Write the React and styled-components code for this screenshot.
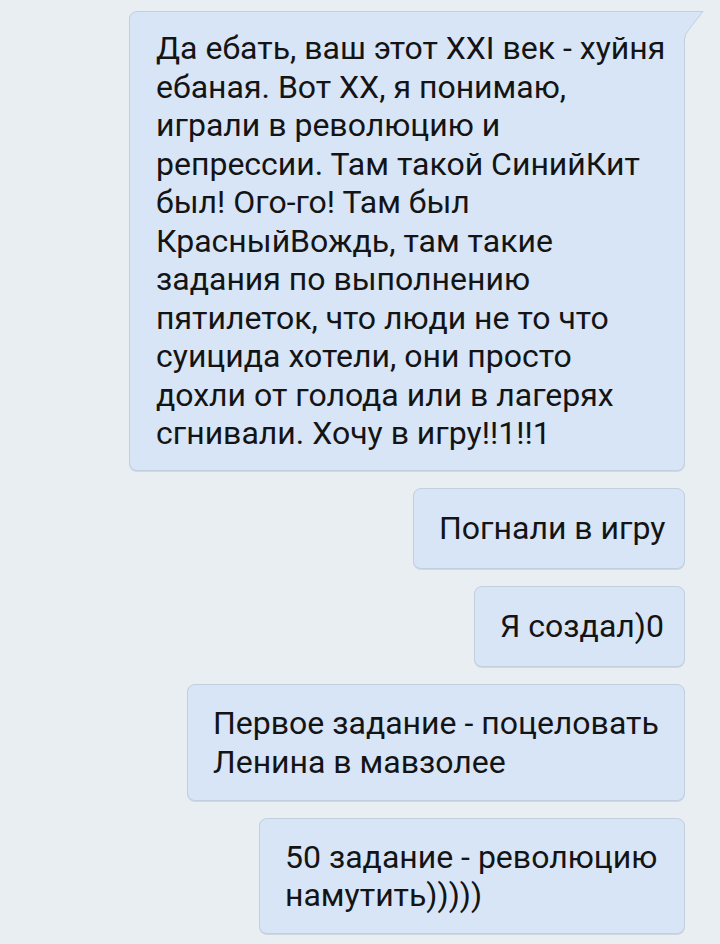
import React from 'react';
import styled, { createGlobalStyle } from 'styled-components';

const GlobalStyle = createGlobalStyle`
    html, body {
        margin: 0;
        padding: 0;
        background: #e9eef3;
    }
    body {
        font-family: Roboto, "Noto Sans", sans-serif;
    }
`;

// Styled components
const Chat = styled.div`
    width: 720px;
    height: 944px;
    overflow: hidden;
    box-sizing: border-box;
    padding: 11px 35px 0 0;
    display: flex;
    flex-direction: column;
    align-items: flex-end;
    gap: 17px;
    background: #e9eef3;
`;

const paddings = {
    first: '17px 16px 17.5px 26px',
    single: '20px 16px 20.5px 25px',
    multi: '19px 16px 18.5px 25px',
};

const Bubble = styled.div`
    position: relative;
    box-sizing: border-box;
    width: ${(p) => p.$width}px;
    padding: ${(p) => paddings[p.$kind]};
    background: #d7e5f7;
    border: 1px solid #c2cfdf;
    border-radius: 8px;
    border-top-right-radius: ${(p) => (p.$kind === 'first' ? '0' : '8px')};
    box-shadow: 0 1px 0 rgba(160, 175, 195, 0.35);
`;

const Line = styled.span`
    display: block;
    white-space: nowrap;
    font-size: 32px;
    line-height: 38.5px;
    color: #141414;
`;

const Tail = styled.svg`
    position: absolute;
    top: -1px;
    right: -20px;
    width: 21px;
    height: 30px;
    overflow: visible;
`;

const messages = [
    {
        width: 556,
        first: true,
        lines: [
            'Да ебать, ваш этот XXI век - хуйня',
            'ебаная. Вот XX, я понимаю,',
            'играли в революцию и',
            'репрессии. Там такой СинийКит',
            'был! Ого-го! Там был',
            'КрасныйВождь, там такие',
            'задания по выполнению',
            'пятилеток, что люди не то что',
            'суицида хотели, они просто',
            'дохли от голода или в лагерях',
            'сгнивали. Хочу в игру!!1!!1',
        ],
    },
    { width: 272, lines: ['Погнали в игру'] },
    { width: 211, lines: ['Я создал)0'] },
    { width: 498, lines: ['Первое задание - поцеловать', 'Ленина в мавзолее'] },
    { width: 426, lines: ['50 задание - революцию', 'намутить)))))'] },
];

function App() {
    return (
        <>
            <GlobalStyle />
            <Chat>
                {messages.map((m, i) => {
                    const kind = m.first ? 'first' : m.lines.length > 1 ? 'multi' : 'single';
                    return (
                        <Bubble key={i} $width={m.width} $kind={kind}>
                            {m.first && (
                                <Tail viewBox="0 0 21 30">
                                    <path d="M0 0.5 L20 0.5 L7 17 Q1.5 23 1 30 L0 30 Z" fill="#d7e5f7" />
                                    <path d="M0 0.5 L20 0.5 L7 17 Q1.5 23 1 30" fill="none" stroke="#c2cfdf" strokeWidth="1" />
                                </Tail>
                            )}
                            {m.lines.map((l, j) => (
                                <Line key={j}>{l}</Line>
                            ))}
                        </Bubble>
                    );
                })}
            </Chat>
        </>
    );
}

export default App;
